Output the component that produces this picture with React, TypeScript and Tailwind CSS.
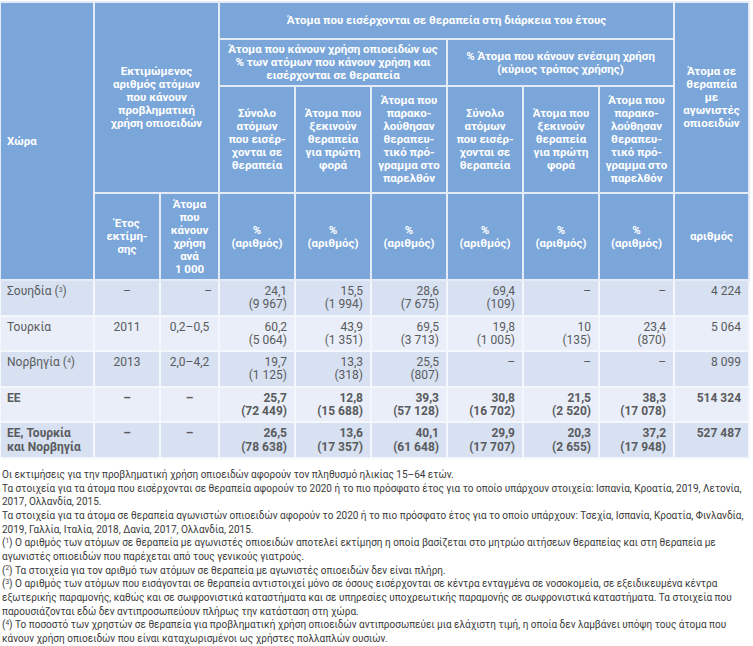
import React from "react";

const font = { fontFamily: "Roboto, 'Noto Sans', sans-serif" };

const headCell =
  "border-2 border-[#e4ebf6] bg-[#7ba6d9] text-white font-bold text-[11.5px] leading-[13px] text-center align-middle px-1";

type Row = {
  country: React.ReactNode;
  bold?: boolean;
  year: string;
  rate: string;
  rateAlign?: "center" | "right";
  vals: (string | [string, string])[];
  total: string;
};

const rows: Row[] = [
  {
    country: (
      <>
        Σουηδία (<sup className="text-[7px]">3</sup>)
      </>
    ),
    year: "–",
    rate: "–",
    rateAlign: "right",
    vals: [["24,1", "(9 967)"], ["15,5", "(1 994)"], ["28,6", "(7 675)"], ["69,4", "(109)"], "–", "–"],
    total: "4 224",
  },
  {
    country: "Τουρκία",
    year: "2011",
    rate: "0,2–0,5",
    vals: [["60,2", "(5 064)"], ["43,9", "(1 351)"], ["69,5", "(3 713)"], ["19,8", "(1 005)"], ["10", "(135)"], ["23,4", "(870)"]],
    total: "5 064",
  },
  {
    country: (
      <>
        Νορβηγία (<sup className="text-[7px]">4</sup>)
      </>
    ),
    year: "2013",
    rate: "2,0–4,2",
    vals: [["19,7", "(1 125)"], ["13,3", "(318)"], ["25,5", "(807)"], "–", "–", "–"],
    total: "8 099",
  },
  {
    country: "ΕΕ",
    bold: true,
    year: "–",
    rate: "–",
    vals: [["25,7", "(72 449)"], ["12,8", "(15 688)"], ["39,3", "(57 128)"], ["30,8", "(16 702)"], ["21,5", "(2 520)"], ["38,3", "(17 078)"]],
    total: "514 324",
  },
  {
    country: (
      <>
        ΕΕ, Τουρκία
        <br />
        και Νορβηγία
      </>
    ),
    bold: true,
    year: "–",
    rate: "–",
    vals: [["26,5", "(78 638)"], ["13,6", "(17 357)"], ["40,1", "(61 648)"], ["29,9", "(17 707)"], ["20,3", "(2 655)"], ["37,2", "(17 948)"]],
    total: "527 487",
  },
];

function Lines({ lines }: { lines: string[] }) {
  return (
    <>
      {lines.map((l, i) => (
        <React.Fragment key={i}>
          {i > 0 && <br />}
          {l}
        </React.Fragment>
      ))}
    </>
  );
}

const footnotes: React.ReactNode[] = [
  <>Οι εκτιμήσεις για την προβληματική χρήση οπιοειδών αφορούν τον πληθυσμό ηλικίας 15–64 ετών.</>,
  <>
    Τα στοιχεία για τα άτομα που εισέρχονται σε θεραπεία αφορούν το 2020 ή το πιο πρόσφατο έτος για το οποίο υπάρχουν στοιχεία: Ισπανία, Κροατία, 2019, Λετονία,
    <br />
    2017, Ολλανδία, 2015.
  </>,
  <>
    Τα στοιχεία για τα άτομα σε θεραπεία αγωνιστών οπιοειδών αφορούν το 2020 ή το πιο πρόσφατο έτος για το οποίο υπάρχουν: Τσεχία, Ισπανία, Κροατία, Φινλανδία,
    <br />
    2019, Γαλλία, Ιταλία, 2018, Δανία, 2017, Ολλανδία, 2015.
  </>,
  <>
    (<sup className="text-[6.5px]">1</sup>) Ο αριθμός των ατόμων σε θεραπεία με αγωνιστές οπιοειδών αποτελεί εκτίμηση η οποία βασίζεται στο μητρώο αιτήσεων θεραπείας και στη θεραπεία με
    <br />
    αγωνιστές οπιοειδών που παρέχεται από τους γενικούς γιατρούς.
  </>,
  <>
    (<sup className="text-[6.5px]">2</sup>) Τα στοιχεία για τον αριθμό των ατόμων σε θεραπεία με αγωνιστές οπιοειδών δεν είναι πλήρη.
  </>,
  <>
    (<sup className="text-[6.5px]">3</sup>) Ο αριθμός των ατόμων που εισάγονται σε θεραπεία αντιστοιχεί μόνο σε όσους εισέρχονται σε κέντρα ενταγμένα σε νοσοκομεία, σε εξειδικευμένα κέντρα
    <br />
    εξωτερικής παραμονής, καθώς και σε σωφρονιστικά καταστήματα και σε υπηρεσίες υποχρεωτικής παραμονής σε σωφρονιστικά καταστήματα. Τα στοιχεία που
    <br />
    παρουσιάζονται εδώ δεν αντιπροσωπεύουν πλήρως την κατάσταση στη χώρα.
  </>,
  <>
    (<sup className="text-[6.5px]">4</sup>) Το ποσοστό των χρηστών σε θεραπεία για προβληματική χρήση οπιοειδών αντιπροσωπεύει μια ελάχιστη τιμή, η οποία δεν λαμβάνει υπόψη τους άτομα που
    <br />
    κάνουν χρήση οπιοειδών που είναι καταχωρισμένοι ως χρήστες πολλαπλών ουσιών.
  </>,
];

export default function App() {
  const subCols = [
    ["Σύνολο", "ατόμων", "που εισέρ-", "χονται σε", "θεραπεία"],
    ["Άτομα που", "ξεκινούν", "θεραπεία", "για πρώτη", "φορά"],
    ["Άτομα που", "παρακο-", "λούθησαν", "θεραπευ-", "τικό πρό-", "γραμμα στο", "παρελθόν"],
  ];

  return (
    <div className="w-[753px] h-[646px] bg-white overflow-hidden" style={font}>
      <table className="table-fixed border-collapse w-[750px] mt-px -ml-px">
        <colgroup>
          <col className="w-[94px]" />
          <col className="w-[66px]" />
          <col className="w-[59px]" />
          <col className="w-[76px]" />
          <col className="w-[76px]" />
          <col className="w-[76px]" />
          <col className="w-[76px]" />
          <col className="w-[76px]" />
          <col className="w-[75px]" />
          <col className="w-[75px]" />
        </colgroup>
        <thead>
          <tr className="h-[37px]">
            <th rowSpan={4} className={headCell + " !text-left pl-[6px]"}>
              Χώρα
            </th>
            <th colSpan={2} rowSpan={3} className={headCell}>
              <Lines lines={["Εκτιμώμενος", "αριθμός ατόμων", "που κάνουν", "προβληματική", "χρήση οπιοειδών"]} />
            </th>
            <th colSpan={6} className={headCell}>
              Άτομα που εισέρχονται σε θεραπεία στη διάρκεια του έτους
            </th>
            <th rowSpan={3} className={headCell}>
              <Lines lines={["Άτομα σε", "θεραπεία", "με", "αγωνιστές", "οπιοειδών"]} />
            </th>
          </tr>
          <tr className="h-[47px]">
            <th colSpan={3} className={headCell}>
              <Lines
                lines={[
                  "Άτομα που κάνουν χρήση οπιοειδών ως",
                  "% των ατόμων που κάνουν χρήση και",
                  "εισέρχονται σε θεραπεία",
                ]}
              />
            </th>
            <th colSpan={3} className={headCell}>
              <Lines lines={["% Άτομα που κάνουν ενέσιμη χρήση", "(κύριος τρόπος χρήσης)"]} />
            </th>
          </tr>
          <tr className="h-[107px]">
            {[...subCols, ...subCols].map((c, i) => (
              <th key={i} className={headCell}>
                <Lines lines={c} />
              </th>
            ))}
          </tr>
          <tr className="h-[87px]">
            <th className={headCell}>
              <Lines lines={["Έτος", "εκτίμη-", "σης"]} />
            </th>
            <th className={headCell}>
              <Lines lines={["Άτομα", "που", "κάνουν", "χρήση", "ανά", "1 000"]} />
            </th>
            {Array.from({ length: 6 }).map((_, i) => (
              <th key={i} className={headCell}>
                %
                <br />
                (αριθμός)
              </th>
            ))}
            <th className={headCell}>αριθμός</th>
          </tr>
        </thead>
        <tbody>
          {rows.map((r, ri) => {
            const bg = ri % 2 === 0 ? "bg-[#d7e1f1]" : "bg-[#e9eef8]";
            const cell =
              "border-2 border-[#f4f7fc] align-top pt-[4px] pb-[3px] text-[12px] leading-[13.3px] text-[#5a5b5e] " +
              bg +
              (r.bold ? " font-bold text-[#4a4b4e]" : "");
            return (
              <tr key={ri} className="h-[34px]">
                <td className={cell + " pl-[6px] text-left"}>{r.country}</td>
                <td className={cell + " text-center"}>{r.year}</td>
                <td className={cell + (r.rateAlign === "right" ? " text-right pr-[6px]" : " text-center")}>{r.rate}</td>
                {r.vals.map((v, vi) => (
                  <td key={vi} className={cell + " text-right pr-[7px]"}>
                    {Array.isArray(v) ? (
                      <>
                        {v[0]}
                        <br />
                        {v[1]}
                      </>
                    ) : (
                      v
                    )}
                  </td>
                ))}
                <td className={cell + " text-right pr-[7px]"}>{r.total}</td>
              </tr>
            );
          })}
        </tbody>
      </table>
      <div className="mt-[9px] pl-[2px] text-[10px] leading-[13.67px] text-[#3a3a3a] whitespace-nowrap">
        {footnotes.map((f, i) => (
          <div key={i}>{f}</div>
        ))}
      </div>
    </div>
  );
}
